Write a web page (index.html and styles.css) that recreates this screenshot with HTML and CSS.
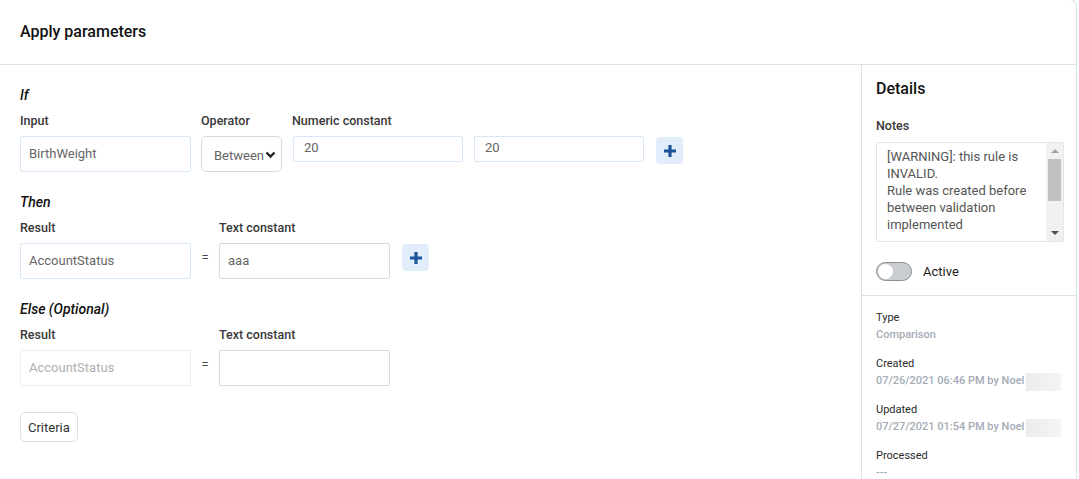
FILE: index.html
```html
<!DOCTYPE html>
<html lang="en">
<head>
    <meta charset="UTF-8">
    <title>Apply parameters</title>
    <link rel="stylesheet" href="styles.css">
</head>
<body>
    <div class="card">
        <div class="card-header">
            <h1>Apply parameters</h1>
        </div>

        <div class="card-body">
            <div class="main">
                <div class="block">
                    <h2>If</h2>
                    <div class="row">
                        <div class="field w-171">
                            <label>Input</label>
                            <div class="input tall blue">BirthWeight</div>
                        </div>
                        <div class="field">
                            <label>Operator</label>
                            <div class="select">
                                <span>Between</span>
                                <svg width="11" height="8" viewBox="0 0 11 8"><path d="M1.5 1.5 L5.5 5.5 L9.5 1.5" fill="none" stroke="#222" stroke-width="2.4"/></svg>
                            </div>
                        </div>
                        <div class="field w-171">
                            <label>Numeric constant</label>
                            <div class="input short blue">20</div>
                        </div>
                        <div class="field w-171">
                            <label>&nbsp;</label>
                            <div class="input short blue">20</div>
                        </div>
                        <div class="field">
                            <label>&nbsp;</label>
                            <button class="add-btn">
                                <svg width="14" height="14" viewBox="0 0 14 14"><path d="M7 1 V13 M1 7 H13" stroke="#1a5598" stroke-width="3.2"/></svg>
                            </button>
                        </div>
                    </div>
                </div>

                <div class="block">
                    <h2>Then</h2>
                    <div class="row">
                        <div class="field w-171">
                            <label>Result</label>
                            <div class="input tall blue">AccountStatus</div>
                        </div>
                        <div class="equals">=</div>
                        <div class="field w-171">
                            <label>Text constant</label>
                            <div class="input tall grey">aaa</div>
                        </div>
                        <div class="field">
                            <label>&nbsp;</label>
                            <button class="add-btn">
                                <svg width="14" height="14" viewBox="0 0 14 14"><path d="M7 1 V13 M1 7 H13" stroke="#1a5598" stroke-width="3.2"/></svg>
                            </button>
                        </div>
                    </div>
                </div>

                <div class="block">
                    <h2>Else (Optional)</h2>
                    <div class="row">
                        <div class="field w-171">
                            <label>Result</label>
                            <div class="input tall disabled">AccountStatus</div>
                        </div>
                        <div class="equals">=</div>
                        <div class="field w-171">
                            <label>Text constant</label>
                            <div class="input tall grey"></div>
                        </div>
                    </div>
                </div>

                <button class="criteria-btn">Criteria</button>
            </div>

            <div class="aside">
                <div class="aside-top">
                    <h3>Details</h3>
                    <label class="notes-label">Notes</label>
                    <div class="notes">
                        <div class="notes-text">[WARNING]: this rule is INVALID.<br>Rule was created before between validation implemented</div>
                        <div class="scrollbar">
                            <span class="arrow up"></span>
                            <span class="thumb"></span>
                            <span class="track"></span>
                            <span class="arrow down"></span>
                        </div>
                    </div>
                    <div class="toggle-row">
                        <span class="toggle"><span class="knob"></span></span>
                        <span>Active</span>
                    </div>
                </div>

                <div class="meta">
                    <div class="meta-item">
                        <div class="meta-label">Type</div>
                        <div class="meta-value">Comparison</div>
                    </div>
                    <div class="meta-item">
                        <div class="meta-label">Created</div>
                        <div class="meta-value">07/26/2021 06:46 PM by Noel <span class="redact"></span></div>
                    </div>
                    <div class="meta-item">
                        <div class="meta-label">Updated</div>
                        <div class="meta-value">07/27/2021 01:54 PM by Noel <span class="redact"></span></div>
                    </div>
                    <div class="meta-item">
                        <div class="meta-label">Processed</div>
                        <div class="meta-value">---</div>
                    </div>
                </div>
            </div>
        </div>
    </div>
</body>
</html>
```

FILE: styles.css
```css
* {
    margin: 0;
    padding: 0;
    box-sizing: border-box;
    font-family: 'Roboto', 'Liberation Sans', sans-serif;
}

body {
    background: #fff;
    width: 1079px;
    height: 479px;
    overflow: hidden;
}

.card {
    width: 1077px;
    min-height: 500px;
    border: 1px solid #dde1e7;
    border-left: none;
    border-top-right-radius: 8px;
    display: flex;
    flex-direction: column;
    margin-top: -1px;
}

.card-header {
    flex-shrink: 0;
    height: 65px;
    border-bottom: 1px solid #dde1e7;
    padding: 22px 20px 0;
}

h1 {
    font-size: 16px;
    font-weight: 500;
    color: #111;
    line-height: 20px;
}

.card-body {
    display: flex;
    flex: 1;
}

.main {
    flex: 1;
    padding: 21px 20px 0;
}

.block {
    margin-bottom: 21px;
}

h2 {
    font-size: 14px;
    font-style: italic;
    font-weight: 500;
    color: #111;
    line-height: 18px;
    margin-bottom: 9px;
}

.row {
    display: flex;
    align-items: flex-start;
}

.field {
    display: flex;
    flex-direction: column;
    margin-right: 10px;
}

.w-171 {
    width: 171px;
}

label {
    font-size: 12.5px;
    font-weight: 500;
    color: #383838;
    line-height: 16px;
    margin-bottom: 7px;
}

.input {
    border: 1px solid #dde1e6;
    border-radius: 2px;
    font-size: 13px;
    color: #666;
    padding: 0 8px;
}

.input.tall {
    height: 36px;
    line-height: 34px;
}

.input.short {
    height: 26px;
    line-height: 22px;
    margin-left: 1px;
    padding: 0 10px;
}

.input.blue {
    border-color: #d8e7f6;
}

.input.grey {
    border-color: #d7dbe0;
}

.input.disabled {
    border-color: #e6eff9;
    color: #b0b0b0;
}

.select {
    width: 81px;
    height: 36px;
    border: 1px solid #d7dbe0;
    border-radius: 5px;
    display: flex;
    align-items: center;
    padding: 2px 0 0 12px;
    font-size: 13px;
    color: #666;
    gap: 1px;
}

.add-btn {
    width: 27px;
    height: 27px;
    margin: 1px 0 0 2px;
    border: none;
    border-radius: 4px;
    background: #e1edfa;
    display: flex;
    align-items: center;
    justify-content: center;
}

.equals {
    width: 8px;
    margin: 30px 10px 0 0;
    font-size: 13px;
    color: #444;
    text-align: center;
}

.criteria-btn {
    margin-top: 5px;
    height: 30px;
    padding: 0 7px;
    border: 1px solid #dcdfe4;
    border-radius: 5px;
    background: #fff;
    font-size: 13px;
    color: #333;
}

.aside {
    width: 215px;
    border-left: 1px solid #dde1e7;
    display: flex;
    flex-direction: column;
}

.aside-top {
    padding: 14px 14px 14px 14px;
    border-bottom: 1px solid #dde1e7;
    display: flex;
    flex-direction: column;
}

h3 {
    font-size: 16px;
    font-weight: 500;
    color: #111;
    line-height: 20px;
    margin-bottom: 19px;
}

.notes-label {
    margin-bottom: 8px;
}

.notes {
    height: 100px;
    width: 188px;
    border: 1px solid #e1e7ee;
    display: flex;
}

.notes-text {
    flex: 1;
    padding: 5px 0 0 10px;
    font-size: 13px;
    line-height: 17px;
    color: #555;
    overflow: hidden;
}

.scrollbar {
    width: 17px;
    background: #f1f1f1;
    display: flex;
    flex-direction: column;
    align-items: center;
}

.arrow {
    width: 0;
    height: 0;
    border-left: 4px solid transparent;
    border-right: 4px solid transparent;
    margin: 6px 0;
}

.arrow.up {
    border-bottom: 4px solid #a3a3a3;
}

.arrow.down {
    border-top: 4px solid #505050;
}

.thumb {
    width: 13px;
    height: 42px;
    background: #c1c1c1;
}

.track {
    flex: 1;
}

.toggle-row {
    display: flex;
    align-items: center;
    gap: 11px;
    margin-top: 20px;
    font-size: 13px;
    color: #222;
}

.toggle {
    width: 36px;
    height: 19px;
    border-radius: 10px;
    background: #c9cdd2;
    border: 1px solid #8a8e94;
    display: flex;
    align-items: center;
    padding-left: 1px;
}

.knob {
    width: 15px;
    height: 15px;
    border-radius: 50%;
    background: #fff;
}

.meta {
    padding: 15px 14px 0;
}

.meta-item {
    margin-bottom: 15px;
}

.meta-label {
    font-size: 11px;
    font-weight: 400;
    color: #2a2a2a;
    line-height: 14px;
    margin-bottom: 3px;
}

.meta-value {
    font-size: 11px;
    font-weight: 500;
    color: #a4abb6;
    line-height: 14px;
    height: 14px;
    display: flex;
    align-items: center;
    gap: 2px;
}

.redact {
    flex-shrink: 0;
    width: 35px;
    height: 18px;
    background: linear-gradient(90deg, #ebecee, #f3f4f5);
    margin-top: 2px;
}
```
